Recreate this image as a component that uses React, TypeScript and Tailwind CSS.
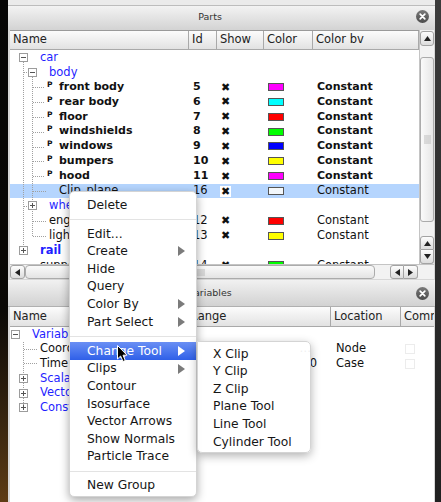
import React from "react";

const Box = ({ open }: { open: boolean }) => (
  <span className="relative flex w-[9px] h-[9px] shrink-0 items-center justify-center border border-[#9c9c9c] bg-white">
    <span className="w-[5px] h-px bg-[#555]" />
    {!open && <span className="absolute left-[3px] top-[1px] w-px h-[5px] bg-[#555]" />}
  </span>
);

const Close = () => (
  <span className="flex w-[13px] h-[13px] items-center justify-center rounded-full bg-gradient-to-b from-[#7a7a7a] to-[#4c4c4c]">
    <svg width="7" height="7" viewBox="0 0 7 7">
      <path d="M1.2 1.2L5.8 5.8M5.8 1.2L1.2 5.8" stroke="#fff" strokeWidth="1.7" strokeLinecap="round" />
    </svg>
  </span>
);

const Tri = ({ dir, color = "#222" }: { dir: "up" | "down" | "left" | "right"; color?: string }) => {
  if (dir === "up")
    return (
      <svg width="7" height="5" viewBox="0 0 7 5">
        <polygon points="0,5 7,5 3.5,0" fill={color} />
      </svg>
    );
  if (dir === "down")
    return (
      <svg width="7" height="5" viewBox="0 0 7 5">
        <polygon points="0,0 7,0 3.5,5" fill={color} />
      </svg>
    );
  if (dir === "left")
    return (
      <svg width="5" height="7" viewBox="0 0 5 7">
        <polygon points="5,0 5,7 0,3.5" fill={color} />
      </svg>
    );
  return (
    <svg width="5" height="7" viewBox="0 0 5 7">
      <polygon points="0,0 0,7 5,3.5" fill={color} />
    </svg>
  );
};

const Btn = ({ cls, children }: { cls: string; children: React.ReactNode }) => (
  <div className={`flex items-center justify-center border border-[#a3a3a3] bg-gradient-to-b from-[#fdfdfd] to-[#dcdcdc] ${cls}`}>
    {children}
  </div>
);

const X = ({ sel }: { sel?: boolean }) => (
  <span className={`text-[11px] leading-none ${sel ? "bg-white px-[1px] -ml-[1px]" : ""}`}>✖</span>
);

const Sw = ({ c }: { c: string }) => <span className={`block w-[16px] h-[8px] border border-[#555] ${c}`} />;

type RowProps = {
  name: React.ReactNode;
  id?: string;
  show?: boolean;
  sw?: string;
  cb?: string;
  bold?: boolean;
  sel?: boolean;
};

const PRow = ({ name, id, show, sw, cb, bold, sel }: RowProps) => (
  <div className={`flex h-[14.85px] shrink-0 items-center whitespace-nowrap ${sel ? "bg-[#b5d5fe]" : ""} ${bold ? "font-bold text-[11px]" : "text-[11.5px]"}`}>
    <div className="w-[179px] shrink-0 flex items-center overflow-hidden">{name}</div>
    <div className="w-[28px] shrink-0 pl-[4px]">{id}</div>
    <div className="w-[47px] shrink-0 pl-[4px] flex items-center">{show && <X sel={sel} />}</div>
    <div className="w-[49px] shrink-0 pl-[4px] flex items-center">{sw && <Sw c={sw} />}</div>
    <div className="w-[106px] shrink-0 pl-[4px]">{cb}</div>
  </div>
);

const Group = ({ pl, open, label, bold }: { pl: string; open: boolean; label: string; bold?: boolean }) => (
  <span className={`flex items-center ${pl}`}>
    <Box open={open} />
    <span className={`ml-[12px] text-[#1f1fff] text-[11.5px] ${bold ? "font-bold" : "font-normal"}`}>{label}</span>
  </span>
);

const Part = ({ label }: { label: string }) => (
  <span className="flex items-center pl-[37px]">
    <span className="w-[6px] text-[7.5px] font-bold leading-none -mt-[5px]">P</span>
    <span className="ml-[6px]">{label}</span>
  </span>
);

const HCell = ({ cls, children }: { cls: string; children?: React.ReactNode }) => (
  <div className={`${cls} shrink-0 h-full flex items-center pl-[3px] border-r border-[#a9a9a9] overflow-hidden whitespace-nowrap text-[11.5px] text-[#222]`}>
    {children}
  </div>
);

const Arrow = ({ white }: { white?: boolean }) => (
  <svg width="7" height="10" viewBox="0 0 7 10">
    <polygon points="0,0 0,10 7,5" fill={white ? "#fff" : "#7b7b7b"} />
  </svg>
);

const MItem = ({ label, sub, hi }: { label: string; sub?: boolean; hi?: boolean }) => (
  <div
    className={`h-[17.6px] flex items-center justify-between pl-[17px] pr-[11px] ${
      hi ? "bg-gradient-to-b from-[#6a8ff4] to-[#2f5fe8] text-white" : "text-[#161616]"
    }`}
  >
    <span>{label}</span>
    {sub && <Arrow white={hi} />}
  </div>
);

const Sep = () => (
  <div className="h-[11.5px] flex items-center">
    <div className="w-full h-px bg-[#e3e3e3]" />
  </div>
);

export default function App() {
  return (
    <div className="relative w-[441px] h-[502px] flex overflow-hidden bg-black font-['DejaVu_Sans',sans-serif] text-[#111]">
      <div className="w-[8px] h-full bg-gradient-to-b from-[#060606] via-[#0b0906] via-[62%] to-[#5e3c14]" />
      <div className="w-[427px] h-full flex flex-col bg-[#d7d7d7]">
        {/* top strip */}
        <div className="h-[6px] shrink-0 bg-[#ebebeb] border-b border-[#bdbdbd]" />
        {/* Parts title */}
        <div className="h-[24px] shrink-0 flex items-center bg-gradient-to-b from-[#f3f3f3] to-[#d3d3d3]">
          <div className="flex-1 text-center text-[9.5px] text-[#333] pb-[2px] pl-[1px]">Parts</div>
          <div className="w-[24px] flex justify-center pb-[3px] pr-[1px]">
            <Close />
          </div>
        </div>
        {/* Parts content */}
        <div className="ml-[2px] mr-[1px] flex flex-col">
          <div className="h-[234px] flex">
            <div className="w-[409px] flex flex-col bg-white border-t border-[#9a9a9a]">
              <div className="h-[19px] shrink-0 flex bg-gradient-to-b from-[#fcfcfc] to-[#e2e2e2] border-b border-[#a9a9a9]">
                <HCell cls="w-[179px]">Name</HCell>
                <HCell cls="w-[28px]">Id</HCell>
                <HCell cls="w-[47px]">Show</HCell>
                <HCell cls="w-[49px]">Color</HCell>
                <HCell cls="w-[106px]">Color bv</HCell>
              </div>
              <div className="relative flex-1 flex flex-col overflow-hidden">
                <PRow name={<Group pl="pl-[9px]" open label="car" />} />
                <PRow name={<Group pl="pl-[18px]" open label="body" />} />
                <PRow bold name={<Part label="front body" />} id="5" show sw="bg-[#ff00ff]" cb="Constant" />
                <PRow bold name={<Part label="rear body" />} id="6" show sw="bg-[#00ffff]" cb="Constant" />
                <PRow bold name={<Part label="floor" />} id="7" show sw="bg-[#ff0000]" cb="Constant" />
                <PRow bold name={<Part label="windshields" />} id="8" show sw="bg-[#00ff00]" cb="Constant" />
                <PRow bold name={<Part label="windows" />} id="9" show sw="bg-[#0000ff]" cb="Constant" />
                <PRow bold name={<Part label="bumpers" />} id="10" show sw="bg-[#ffff00]" cb="Constant" />
                <PRow bold name={<Part label="hood" />} id="11" show sw="bg-[#ff00ff]" cb="Constant" />
                <PRow sel name={<span className="pl-[49px]">Clip_plane</span>} id="16" show sw="bg-[#f3f7fb]" cb="Constant" />
                <PRow name={<Group pl="pl-[18px]" open={false} label="wheels" />} />
                <PRow name={<span className="pl-[39px]">engine</span>} id="12" show sw="bg-[#ff0000]" cb="Constant" />
                <PRow name={<span className="pl-[39px]">lights</span>} id="13" show sw="bg-[#ffff00]" cb="Constant" />
                <PRow name={<Group pl="pl-[9px]" open={false} label="rail" bold />} />
                <PRow name={<span className="pl-[30px]">support</span>} id="14" show sw="bg-[#00ff00]" cb="Constant" />
                <svg className="absolute left-0 top-0 pointer-events-none" width="60" height="214">
                  <g stroke="#a0a0a0" strokeDasharray="1 1" strokeWidth="1">
                    <line x1="13.5" y1="12" x2="13.5" y2="196" />
                    <line x1="14" y1="22.5" x2="18" y2="22.5" />
                    <line x1="14" y1="156.5" x2="18" y2="156.5" />
                    <line x1="22.5" y1="27" x2="22.5" y2="151" />
                    <line x1="23" y1="37.5" x2="35" y2="37.5" />
                    <line x1="23" y1="52.5" x2="35" y2="52.5" />
                    <line x1="23" y1="67.5" x2="35" y2="67.5" />
                    <line x1="23" y1="82.5" x2="35" y2="82.5" />
                    <line x1="23" y1="97.5" x2="35" y2="97.5" />
                    <line x1="23" y1="111.5" x2="35" y2="111.5" />
                    <line x1="23" y1="126.5" x2="35" y2="126.5" />
                    <line x1="23" y1="141.5" x2="37" y2="141.5" />
                    <line x1="22.5" y1="161" x2="22.5" y2="186" />
                    <line x1="23" y1="171.5" x2="36" y2="171.5" />
                    <line x1="23" y1="186.5" x2="36" y2="186.5" />
                  </g>
                </svg>
              </div>
            </div>
            {/* vertical scrollbar */}
            <div className="w-[15px] flex flex-col bg-[#f2f2f2] border-l border-[#c4c4c4]">
              <Btn cls="h-[15px] mt-[1px] rounded-[3px]">
                <Tri dir="up" />
              </Btn>
              <div className="h-[11px]" />
              <div className="h-[165px] relative rounded-[3px] border border-[#ababab] bg-gradient-to-r from-[#fafafa] to-[#e6e6e6] flex items-center justify-center">
                <div className="w-[7px] h-[9px] bg-[radial-gradient(#bbb_0.6px,transparent_0.8px)] bg-[length:2px_2px]" />
              </div>
              <div className="flex-1" />
              <Btn cls="h-[14px] rounded-t-[3px]">
                <Tri dir="up" />
              </Btn>
              <Btn cls="h-[14px] rounded-b-[3px] border-t-0">
                <Tri dir="down" />
              </Btn>
            </div>
          </div>
          {/* horizontal scrollbar */}
          <div className="h-[15px] flex bg-[#f2f2f2] border-t border-[#c4c4c4]">
            <Btn cls="w-[15px] rounded-[3px]">
              <Tri dir="left" />
            </Btn>
            <div className="w-[350px] rounded-[4px] border border-[#ababab] bg-gradient-to-b from-[#fafafa] to-[#e4e4e4] flex items-center justify-center">
              <div className="w-[10px] h-[7px] bg-[radial-gradient(#bbb_0.6px,transparent_0.8px)] bg-[length:2px_2px]" />
            </div>
            <div className="w-[15px]" />
            <Btn cls="w-[14px] rounded-l-[3px]">
              <Tri dir="left" />
            </Btn>
            <Btn cls="w-[14px] rounded-r-[3px] border-l-0">
              <Tri dir="right" />
            </Btn>
            <div className="flex-1" />
          </div>
        </div>
        <div className="h-[1px] shrink-0" />
        {/* Variables title */}
        <div className="h-[27px] shrink-0 flex items-center bg-gradient-to-b from-[#f1f1f1] to-[#d2d2d2] border-b border-[#b0b0b0]">
          <div className="flex-1 text-center text-[9.5px] text-[#333] pl-[1px]">Variables</div>
          <div className="w-[24px] flex justify-center pr-[1px]">
            <Close />
          </div>
        </div>
        {/* Variables table */}
        <div className="ml-[2px] mr-[1px] flex-1 flex flex-col bg-white overflow-hidden">
          <div className="h-[20px] shrink-0 flex overflow-hidden bg-gradient-to-b from-[#fcfcfc] to-[#e2e2e2] border-b border-[#a9a9a9]">
            <HCell cls="w-[177px]">Name</HCell>
            <HCell cls="w-[144px]">Range</HCell>
            <HCell cls="w-[70px]">Location</HCell>
            <HCell cls="w-[60px]">Comment</HCell>
          </div>
          <div className="relative flex flex-col text-[11.5px] whitespace-nowrap">
            <div className="h-[14.7px] flex items-center">
              <span className="flex items-center pl-[1px]">
                <Box open />
                <span className="ml-[12px] text-[#1f1fff]">Variables</span>
              </span>
            </div>
            <div className="h-[14.7px] flex items-center">
              <div className="w-[177px] shrink-0 pl-[30px]">Coordinates</div>
              <div className="w-[144px] shrink-0 text-right pr-[20px]">…</div>
              <div className="w-[70px] shrink-0 pl-[5px]">Node</div>
              <div className="ml-[4px] w-[10px] h-[10px] border border-[#ececec]" />
            </div>
            <div className="h-[14.7px] flex items-center">
              <div className="w-[177px] shrink-0 pl-[30px]">Time</div>
              <div className="w-[144px] shrink-0 text-right pr-[14px]">0</div>
              <div className="w-[70px] shrink-0 pl-[5px]">Case</div>
              <div className="ml-[4px] w-[10px] h-[10px] border border-[#ececec]" />
            </div>
            <div className="h-[14.7px] flex items-center">
              <Group pl="pl-[9px]" open={false} label="Scalars" />
            </div>
            <div className="h-[14.7px] flex items-center">
              <Group pl="pl-[9px]" open={false} label="Vectors" />
            </div>
            <div className="h-[14.7px] flex items-center">
              <Group pl="pl-[9px]" open={false} label="Constants" />
            </div>
            <svg className="absolute left-0 top-0 pointer-events-none" width="40" height="90">
              <g stroke="#a0a0a0" strokeDasharray="1 1" strokeWidth="1">
                <line x1="13.5" y1="15" x2="13.5" y2="49" />
                <line x1="14" y1="22.5" x2="27" y2="22.5" />
                <line x1="14" y1="36.5" x2="27" y2="36.5" />
                <line x1="13.5" y1="56" x2="13.5" y2="63" />
                <line x1="13.5" y1="71" x2="13.5" y2="78" />
              </g>
            </svg>
          </div>
        </div>
      </div>
      <div className="w-[6px] h-full bg-gradient-to-b from-[#3b3b3b] to-[#202020]" />

      {/* context menu */}
      <div className="absolute left-[69px] top-[191px] w-[128px] h-[306px] py-[4px] rounded-[5px] bg-white border border-[#d4d4d4] shadow-[0_3px_10px_rgba(0,0,0,0.35)] text-[12.3px] whitespace-nowrap">
        <MItem label="Delete" />
        <Sep />
        <MItem label="Edit..." />
        <MItem label="Create" sub />
        <MItem label="Hide" />
        <MItem label="Query" />
        <MItem label="Color By" sub />
        <MItem label="Part Select" sub />
        <Sep />
        <MItem label="Change Tool" sub hi />
        <MItem label="Clips" sub />
        <MItem label="Contour" />
        <MItem label="Isosurface" />
        <MItem label="Vector Arrows" />
        <MItem label="Show Normals" />
        <MItem label="Particle Trace" />
        <Sep />
        <MItem label="New Group" />
      </div>

      {/* submenu */}
      <div className="absolute left-[197px] top-[341px] w-[114px] h-[112px] py-[3px] rounded-r-[5px] rounded-bl-[5px] bg-white/[0.93] border border-[#d4d4d4] shadow-[0_3px_10px_rgba(0,0,0,0.3)] text-[12.3px] whitespace-nowrap text-[#161616]">
        {["X Clip", "Y Clip", "Z Clip", "Plane Tool", "Line Tool", "Cylinder Tool"].map((t) => (
          <div key={t} className="h-[17.6px] flex items-center pl-[15px]">
            {t}
          </div>
        ))}
      </div>

      {/* cursor */}
      <svg className="absolute left-[116px] top-[344px]" width="13" height="19" viewBox="0 0 13 19">
        <path d="M1.5 1.5 L1.5 15 L4.6 12 L7 17.5 L9.3 16.5 L7 11.2 L11 11.2 Z" fill="#000" stroke="#fff" strokeWidth="1" />
      </svg>
    </div>
  );
}
